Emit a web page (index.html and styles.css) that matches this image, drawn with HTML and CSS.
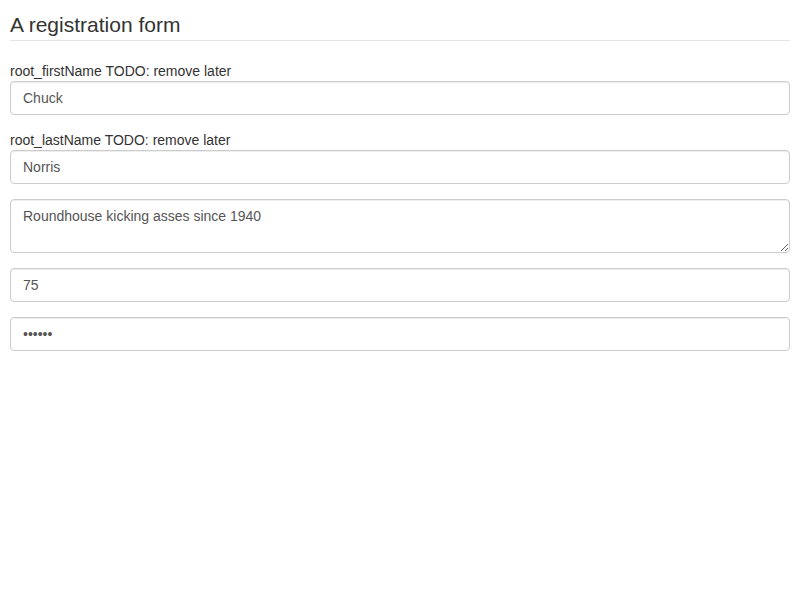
FILE: index.html
```html
<!DOCTYPE html>
<html>
<head>
<meta charset="utf-8">
<link rel="stylesheet" href="styles.css">
</head>
<body>
<form class="form">
  <fieldset class="fieldset">
    <legend class="legend">A registration form</legend>
    <div class="form-group">
      <label class="label" for="root_firstName">root_firstName TODO: remove later</label>
      <input class="form-control" id="root_firstName" type="text" value="Chuck">
    </div>
    <div class="form-group">
      <label class="label" for="root_lastName">root_lastName TODO: remove later</label>
      <input class="form-control" id="root_lastName" type="text" value="Norris">
    </div>
    <div class="form-group">
      <textarea class="form-control textarea" rows="2">Roundhouse kicking asses since 1940</textarea>
    </div>
    <div class="form-group">
      <input class="form-control" type="number" value="75">
    </div>
    <div class="form-group">
      <input class="form-control" type="password" value="noneed">
    </div>
  </fieldset>
</form>
</body>
</html>
```
FILE: styles.css
```css
html, body {
  margin: 0;
  padding: 0;
  background: #fff;
}
body {
  padding: 10px;
  font-family: "Liberation Sans", Arial, sans-serif;
  font-size: 14px;
  line-height: 20px;
  color: #333;
}
.form { margin: 0; }
.fieldset {
  margin: 0;
  padding: 0;
  border: 0;
  min-width: 0;
}
.legend {
  display: block;
  width: 100%;
  padding: 0;
  margin: 0 0 20px;
  font-size: 21px;
  line-height: 30px;
  color: #333;
  border: 0;
  border-bottom: 1px solid #e5e5e5;
}
.form-group {
  margin-bottom: 15px;
}
.label {
  display: block;
  font-weight: normal;
  margin: 0;
}
.form-control {
  display: block;
  box-sizing: border-box;
  width: 100%;
  height: 34px;
  margin: 0;
  padding: 6px 12px;
  font-family: "Liberation Sans", Arial, sans-serif;
  font-size: 14px;
  line-height: 20px;
  color: #555;
  background: #fff;
  border: 1px solid #ccc;
  border-radius: 4px;
  box-shadow: inset 0 1px 1px rgba(0,0,0,.075);
  outline: none;
}
.textarea {
  height: 54px;
  resize: vertical;
}
```
